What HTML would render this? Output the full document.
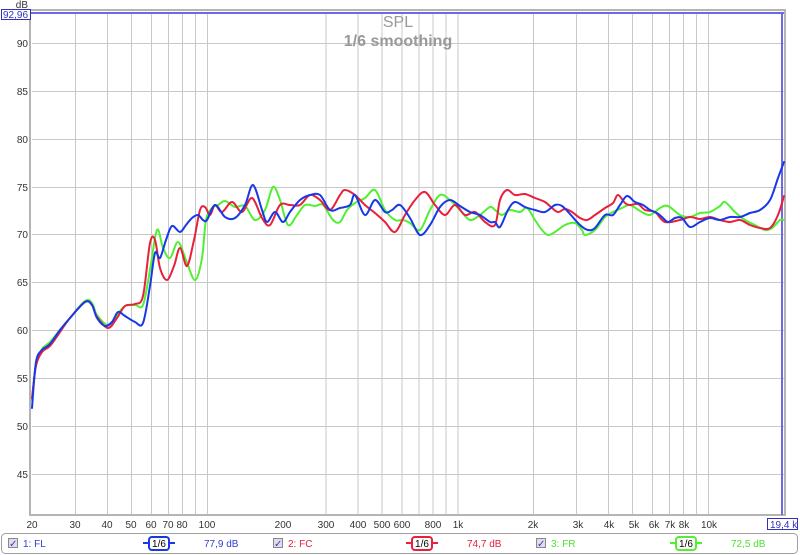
<!DOCTYPE html>
<html><head><meta charset="utf-8"><style>
body{margin:0;width:800px;height:555px;background:#fff;overflow:hidden;font-family:"Liberation Sans",sans-serif}
svg{position:absolute;left:0;top:0}
</style></head><body>
<svg id="s" width="800" height="555" viewBox="0 0 800 555" font-family="Liberation Sans, sans-serif">
<rect x="0" y="0" width="800" height="555" fill="#fff"/>
<g stroke="#c8c8c8" stroke-width="1">
<line x1="32" y1="43.5" x2="784" y2="43.5"/><line x1="32" y1="91.5" x2="784" y2="91.5"/>
<line x1="32" y1="139.5" x2="784" y2="139.5"/><line x1="32" y1="187.5" x2="784" y2="187.5"/>
<line x1="32" y1="234.5" x2="784" y2="234.5"/><line x1="32" y1="282.5" x2="784" y2="282.5"/>
<line x1="32" y1="330.5" x2="784" y2="330.5"/><line x1="32" y1="378.5" x2="784" y2="378.5"/>
<line x1="32" y1="426.5" x2="784" y2="426.5"/><line x1="32" y1="474.5" x2="784" y2="474.5"/>
<g id="dec">
<line x1="75.5" y1="12" x2="75.5" y2="514"/><line x1="107.5" y1="12" x2="107.5" y2="514"/>
<line x1="131.5" y1="12" x2="131.5" y2="514"/><line x1="151.5" y1="12" x2="151.5" y2="514"/>
<line x1="168.5" y1="12" x2="168.5" y2="514"/><line x1="182.5" y1="12" x2="182.5" y2="514"/>
<line x1="195.5" y1="12" x2="195.5" y2="514"/><line x1="207.5" y1="12" x2="207.5" y2="514"/>
</g>
<use href="#dec" x="250.5"/>
<use href="#dec" x="501"/>
<line x1="533.5" y1="12" x2="533.5" y2="514"/>
</g>
<rect x="30" y="10" width="755" height="505" fill="none" stroke="#b4b4b4" stroke-width="2"/>
<line x1="31" y1="13" x2="784" y2="13" stroke="#6a6ae8" stroke-width="2"/>
<line x1="782" y1="13" x2="782" y2="515" stroke="#6a6ae8" stroke-width="2"/>
<text x="398" y="27" font-size="16" fill="#999" text-anchor="middle">SPL</text>
<text x="398" y="46" font-size="16" font-weight="bold" fill="#999" text-anchor="middle">1/6 smoothing</text>
<g font-size="10" fill="#333" text-anchor="end">
<text x="28" y="47">90</text><text x="28" y="95">85</text><text x="28" y="143">80</text>
<text x="28" y="191">75</text><text x="28" y="238">70</text><text x="28" y="286">65</text>
<text x="28" y="334">60</text><text x="28" y="382">55</text><text x="28" y="430">50</text>
<text x="28" y="478">45</text><text x="28" y="8">dB</text>
</g>
<rect x="1.5" y="9.5" width="29" height="10" fill="#fff" stroke="#3030c0"/>
<text x="3" y="18" font-size="10" fill="#3030c0">92,96</text>
<g font-size="10" fill="#333" text-anchor="middle">
<text x="32" y="528">20</text><text x="75" y="528">30</text><text x="107" y="528">40</text>
<text x="131" y="528">50</text><text x="151" y="528">60</text><text x="168" y="528">70</text>
<text x="182" y="528">80</text><text x="207" y="528">100</text><text x="283" y="528">200</text>
<text x="326" y="528">300</text><text x="358" y="528">400</text><text x="382" y="528">500</text>
<text x="402" y="528">600</text><text x="433" y="528">800</text><text x="458" y="528">1k</text>
<text x="533" y="528">2k</text><text x="578" y="528">3k</text><text x="609" y="528">4k</text>
<text x="634" y="528">5k</text><text x="654" y="528">6k</text><text x="670" y="528">7k</text>
<text x="684" y="528">8k</text><text x="709" y="528">10k</text>
</g>
<rect x="767.5" y="518.5" width="30" height="11" fill="#fff" stroke="#3030c0"/>
<text x="770" y="528" font-size="10" fill="#3030c0">19,4 k</text>
<g id="curves" fill="none" stroke-width="2" stroke-linejoin="round" stroke-linecap="round">
<polyline stroke="#50f030" points="32,400 36,364 42,349 50,342 60,330 70,318 85,301 92,303 97,315 108,325 117,315 125,306 135,305 143,305 150,270 157,230 163,248 170,258 178,242 186,260 195,280 202,258 206,220 212,208 218,205 225,201 235,207 245,206 255,220 265,210 273,187 280,200 288,225 297,215 305,205 315,206 323,205 333,220 340,222 347,210 355,203 365,198 375,190 385,210 395,220 403,220 410,223 420,230 430,210 440,195 450,200 460,210 470,220 480,215 490,207 495,210 502,215 510,210 520,212 527,208 535,220 542,230 548,235 555,232 565,225 575,223 582,230 585,235 595,230 605,217 613,212 622,208 630,205 640,211 650,215 660,208 668,206 680,215 690,217 700,213 710,212 720,206 725,202 735,212 745,220 755,225 765,230 772,228 780,220 784,220"/>
<polyline stroke="#e8203c" points="32,398 36,366 42,352 50,346 60,332 70,318 85,302 92,305 97,317 108,328 117,318 125,306 135,304 143,296 150,243 155,240 160,268 167,280 174,266 180,248 187,266 194,240 200,210 205,207 210,215 215,205 222,212 232,202 242,212 252,198 262,218 270,225 280,205 290,205 300,205 310,195 320,200 330,210 340,195 345,190 355,195 365,205 375,213 385,222 395,232 405,215 415,200 425,192 435,205 445,215 455,205 465,215 475,212 485,222 495,225 500,200 507,190 515,195 525,194 535,198 545,202 552,208 558,212 565,209 572,212 580,218 587,220 595,215 605,208 613,203 618,195 625,203 630,205 638,204 645,210 655,212 665,222 680,220 690,217 700,219 710,217 720,220 730,222 740,220 750,225 760,228 770,228 778,215 784,196"/>
<polyline stroke="#1838e8" points="32,408 36,362 42,350 50,344 60,330 70,318 85,302 92,305 97,318 105,326 112,322 118,312 125,316 135,322 143,323 150,286 155,253 160,258 166,240 172,226 180,232 186,225 192,218 198,215 203,220 207,220 215,205 225,217 235,218 245,205 253,185 262,210 267,222 275,212 283,222 290,212 300,200 310,195 320,195 330,210 340,208 350,205 355,195 365,215 375,200 385,212 392,210 400,205 410,218 420,235 430,225 440,207 450,200 460,206 470,212 480,215 490,222 495,222 500,227 508,210 515,202 525,207 535,210 545,212 555,205 562,206 570,214 580,225 588,230 595,228 605,215 613,215 620,205 627,196 635,202 643,205 650,210 657,213 662,217 668,222 675,218 682,218 690,227 700,222 710,218 720,220 730,217 740,217 750,213 760,210 770,200 778,178 784,162"/>
</g>
<rect x="1.5" y="533.5" width="796" height="20" rx="4" fill="#fff" stroke="#a0a0a0"/>
<g font-size="10">
<rect x="8.5" y="538.5" width="9" height="9" fill="#dde" stroke="#888"/><text x="9" y="547" fill="#3040d0" font-size="10">✓</text>
<text x="23" y="547" fill="#3040d0">1: FL</text>
<rect x="273.5" y="538.5" width="9" height="9" fill="#dde" stroke="#888"/><text x="274" y="547" fill="#3040d0">✓</text>
<text x="288" y="547" fill="#e0203c">2: FC</text>
<rect x="536.5" y="538.5" width="9" height="9" fill="#dde" stroke="#888"/><text x="537" y="547" fill="#3040d0">✓</text>
<text x="551" y="547" fill="#50e030">3: FR</text>
<text x="204" y="547" fill="#3040d0">77,9 dB</text>
<text x="467" y="547" fill="#e0203c">74,7 dB</text>
<text x="731" y="547" fill="#50e030">72,5 dB</text>
</g>
<g stroke-width="2" fill="#fff">
<line x1="143" y1="543" x2="175" y2="543" stroke="#1838e8"/><rect x="149" y="537" width="20" height="13" rx="3" stroke="#1838e8"/>
<line x1="406" y1="543" x2="438" y2="543" stroke="#e8203c"/><rect x="412" y="537" width="20" height="13" rx="3" stroke="#e8203c"/>
<line x1="670" y1="543" x2="702" y2="543" stroke="#50f030"/><rect x="676" y="537" width="20" height="13" rx="3" stroke="#50f030"/>
</g>
<g font-size="10" fill="#000" text-anchor="middle">
<text x="159" y="547">1/6</text><text x="422" y="547">1/6</text><text x="686" y="547">1/6</text>
</g>
</svg>
<script>
(function(){
var NS="http://www.w3.org/2000/svg";
var pls=document.querySelectorAll("#curves polyline");
for(var k=0;k<pls.length;k++){
var pl=pls[k];
var p=pl.getAttribute("points").trim().split(/\s+/).map(function(s){return s.split(",").map(Number);});
var d="M"+p[0][0]+","+p[0][1];
for(var i=0;i<p.length-1;i++){
var p0=p[i>0?i-1:i],p1=p[i],p2=p[i+1],p3=p[i+2<p.length?i+2:i+1];
var c1x=p1[0]+(p2[0]-p0[0])/6,c1y=p1[1]+(p2[1]-p0[1])/6;
var c2x=p2[0]-(p3[0]-p1[0])/6,c2y=p2[1]-(p3[1]-p1[1])/6;
d+=" C"+c1x.toFixed(1)+","+c1y.toFixed(1)+" "+c2x.toFixed(1)+","+c2y.toFixed(1)+" "+p2[0]+","+p2[1];
}
var path=document.createElementNS(NS,"path");
path.setAttribute("d",d);
path.setAttribute("stroke",pl.getAttribute("stroke"));
pl.parentNode.replaceChild(path,pl);
}
})();
</script>
</body></html>
